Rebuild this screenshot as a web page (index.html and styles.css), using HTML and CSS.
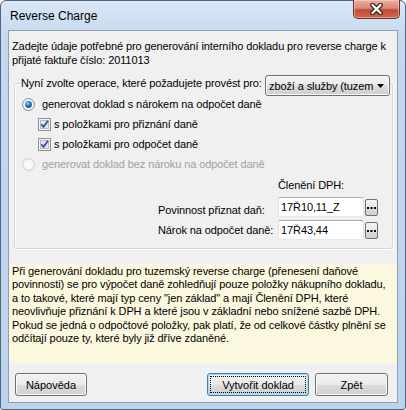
FILE: index.html
```html
<!DOCTYPE html>
<html lang="cs">
<head>
    <meta charset="UTF-8">
    <title>Reverse Charge</title>
    <link rel="stylesheet" href="styles.css">
</head>
<body>
    <div class="window">
        <div class="titlebar">
            <span class="title">Reverse Charge</span>
            <button class="close-btn">
                <svg width="15" height="12" viewBox="0 0 15 12">
                    <path d="M3.5 2 L11.5 10 M11.5 2 L3.5 10" stroke="#3a1f1c" stroke-width="4.6" stroke-linecap="round"/>
                    <path d="M3.5 2 L11.5 10 M11.5 2 L3.5 10" stroke="#fff" stroke-width="2.4" stroke-linecap="round"/>
                </svg>
            </button>
        </div>

        <div class="client">
            <p class="intro">Zadejte údaje potřebné pro generování interního dokladu pro reverse charge k<br>přijaté faktuře číslo: 2011013</p>

            <div class="group">
                <div class="group-head">
                    <span class="group-title">Nyní zvolte operace, které požadujete provést pro:</span>
                    <div class="combo">
                        <span class="combo-text">zboží a služby (tuzem</span>
                        <svg width="7" height="4" viewBox="0 0 7 4"><path d="M0 0 H7 L3.5 4 Z" fill="#000"/></svg>
                    </div>
                </div>

                <label class="opt">
                    <svg class="radio" width="13" height="13" viewBox="0 0 13 13">
                        <defs>
                            <radialGradient id="dot" cx="40%" cy="35%" r="70%">
                                <stop offset="0" stop-color="#9fd8ff"/>
                                <stop offset="0.5" stop-color="#2a7bd0"/>
                                <stop offset="1" stop-color="#13448d"/>
                            </radialGradient>
                        </defs>
                        <circle cx="6.5" cy="6.5" r="6" fill="#ececec" stroke="#8e8f8f"/>
                        <circle cx="6.5" cy="6.5" r="4.6" fill="#f8f8f8"/>
                        <circle cx="6.5" cy="6.5" r="3.4" fill="url(#dot)"/>
                    </svg>
                    generovat doklad s nárokem na odpočet daně
                </label>
                <label class="opt sub">
                    <svg width="13" height="13" viewBox="0 0 13 13">
                        <rect x="0.5" y="0.5" width="12" height="12" fill="#f4f4f4" stroke="#8e8f8f"/>
                        <rect x="2.5" y="2.5" width="8" height="8" fill="#dfe6f0" stroke="#b3bac4"/>
                        <path d="M3.3 6.3 L5.6 8.8 L10 2.8" fill="none" stroke="#3d4f8f" stroke-width="1.8"/>
                    </svg>
                    s položkami pro přiznání daně
                </label>
                <label class="opt sub">
                    <svg width="13" height="13" viewBox="0 0 13 13">
                        <rect x="0.5" y="0.5" width="12" height="12" fill="#f4f4f4" stroke="#8e8f8f"/>
                        <rect x="2.5" y="2.5" width="8" height="8" fill="#dfe6f0" stroke="#b3bac4"/>
                        <path d="M3.3 6.3 L5.6 8.8 L10 2.8" fill="none" stroke="#3d4f8f" stroke-width="1.8"/>
                    </svg>
                    s položkami pro odpočet daně
                </label>
                <label class="opt disabled">
                    <svg class="radio" width="13" height="13" viewBox="0 0 13 13">
                        <circle cx="6.5" cy="6.5" r="6" fill="#f2f2f2" stroke="#cfcfcf"/>
                        <circle cx="6.5" cy="6.5" r="4.6" fill="#f7f7f7"/>
                    </svg>
                    generovat doklad bez nároku na odpočet daně
                </label>

                <div class="dph">
                    <div class="dph-head">Členění DPH:</div>
                    <div class="dph-row">
                        <span class="dph-label low">Povinnost přiznat daň:</span>
                        <div class="field">17Ř10,11_Z</div>
                        <button class="dots">
                            <svg width="9" height="3" viewBox="0 0 9 3"><rect x="0" y="0" width="2" height="2"/><rect x="3.5" y="0" width="2" height="2"/><rect x="7" y="0" width="2" height="2"/></svg>
                        </button>
                    </div>
                    <div class="dph-row">
                        <span class="dph-label">Nárok na odpočet daně:</span>
                        <div class="field">17Ř43,44</div>
                        <button class="dots">
                            <svg width="9" height="3" viewBox="0 0 9 3"><rect x="0" y="0" width="2" height="2"/><rect x="3.5" y="0" width="2" height="2"/><rect x="7" y="0" width="2" height="2"/></svg>
                        </button>
                    </div>
                </div>
            </div>

            <div class="note">Při generování dokladu pro tuzemský reverse charge (přenesení daňové<br>povinnosti) se pro výpočet daně zohledňují pouze položky nákupního dokladu,<br>a to takové, které mají typ ceny "jen základ" a mají Členění DPH, které<br>neovlivňuje přiznání k DPH a které jsou v základní nebo snížené sazbě DPH.<br>Pokud se jedná o odpočtové položky, pak platí, že od celkové částky plnění se<br>odčítají pouze ty, které byly již dříve zdaněné.</div>

            <div class="buttons">
                <button class="btn help">Nápověda</button>
                <button class="btn default">Vytvořit doklad</button>
                <button class="btn back">Zpět</button>
            </div>
        </div>
    </div>
</body>
</html>
```

FILE: styles.css
```css
body {
    margin: 0;
    background-color: #fff;
    font-family: "Liberation Sans", Arial, sans-serif;
    font-size: 11px;
    letter-spacing: -0.1px;
    white-space: nowrap;
    color: #000;
}
.window {
    width: 406px;
    height: 410px;
    box-sizing: border-box;
    border: 1px solid #4f6680;
    border-radius: 6px 6px 3px 3px;
    background: linear-gradient(#d9e6f5, #c4d8ef 40px, #bdd3ec);
    display: flex;
    flex-direction: column;
}
.titlebar {
    height: 29px;
    display: flex;
    align-items: flex-start;
}
.title {
    margin: 9px 0 0 9px;
    font-size: 12px;
    letter-spacing: 0;
    line-height: 13px;
}
.close-btn {
    margin: -1px 5px 0 auto;
    width: 47px;
    height: 19px;
    padding: 0;
    border: 1px solid #6a3028;
    border-top: none;
    border-radius: 0 0 5px 5px;
    background: linear-gradient(#eab0a2, #d98a78 45%, #c24a33 55%, #d0664c);
    box-shadow: inset 0 0 0 1px rgba(255, 220, 210, 0.5);
    display: flex;
    align-items: center;
    justify-content: center;
}
.client {
    flex: 1;
    margin: 0 7px 6px;
    border: 1px solid #8e9fb5;
    background-color: #f0f0f0;
    display: flex;
    flex-direction: column;
}
.intro {
    margin: 8px 0 0 3px;
    line-height: 14px;
}
/* skupina s volbami */
.group {
    margin: 16px 4px 0 5px;
    padding-bottom: 8px;
    border: 1px solid #d0d6db;
    border-radius: 3px;
    box-shadow: inset 1px 1px 0 #fff, 1px 1px 0 #fff;
}
.group-head {
    display: flex;
    align-items: flex-start;
    height: 21px;
    margin: -9px 0 -2px;
    padding: 0 2px 0 5px;
}
.group-title {
    margin-top: 2px;
    padding: 0 1px;
    line-height: 13px;
    background-color: #f0f0f0;
}
.combo {
    margin-left: auto;
    flex-shrink: 0;
    width: 125px;
    height: 21px;
    box-sizing: border-box;
    border: 1px solid #707070;
    border-radius: 3px;
    background: linear-gradient(#f2f2f2, #ebebeb 50%, #dddddd 50%, #cfcfcf);
    box-shadow: inset 0 0 0 1px #fafafa;
    display: flex;
    align-items: center;
    padding: 0 5px 0 3px;
}
.combo-text {
    flex: 1;
    overflow: hidden;
}
.combo svg {
    flex-shrink: 0;
    margin-left: 4px;
}
.opt {
    display: flex;
    align-items: center;
    gap: 7px;
    height: 20px;
    padding-left: 7px;
}
.opt.sub {
    gap: 3px;
    padding-left: 23px;
}
.opt.disabled {
    color: #a0a0a0;
}
.dph {
    margin: 5px 0 0 143px;
}
.dph-head {
    padding-left: 120px;
    line-height: 13px;
    margin-bottom: 5px;
}
.dph-row {
    display: flex;
    align-items: center;
    height: 20px;
}
.dph-row + .dph-row {
    margin-top: 3px;
}
.dph-label {
    width: 120px;
}
.dph-label.low {
    padding-top: 5px;
}
.field {
    width: 86px;
    height: 20px;
    box-sizing: border-box;
    padding-left: 2px;
    line-height: 18px;
    background-color: #fff;
    border: 1px solid;
    border-color: #abadb3 #dbdfe6 #e3e9ef #e2e3ea;
    border-radius: 2px;
}
.dots {
    margin-left: 1px;
    width: 13px;
    height: 17px;
    padding: 3px 0 0;
    border: 1px solid #707070;
    border-radius: 2px;
    background: linear-gradient(#f2f2f2, #ebebeb 50%, #dddddd 50%, #cfcfcf);
    display: flex;
    align-items: center;
    justify-content: center;
}
/* žlutá nápověda */
.note {
    margin-top: 15px;
    height: 99px;
    box-sizing: border-box;
    padding: 1px 0 0 3px;
    line-height: 13.4px;
    background-color: #fcf8df;
}
.buttons {
    display: flex;
    gap: 6px;
    margin-top: 10px;
    padding: 0 9px 0 6px;
}
.btn {
    height: 23px;
    padding: 0;
    font: inherit;
    color: #000;
    border: 1px solid #707070;
    border-radius: 3px;
    background: linear-gradient(#f2f2f2, #ebebeb 50%, #dddddd 50%, #cfcfcf);
    box-shadow: inset 0 0 0 1px #fbfbfb;
}
.help {
    width: 72px;
    margin-right: auto;
}
.default {
    width: 102px;
    border-color: #3c7fb1;
    box-shadow: inset 0 0 0 1px #9fdcf7;
    outline: 1px dotted #000;
    outline-offset: -4px;
}
.back {
    width: 73px;
}
```
